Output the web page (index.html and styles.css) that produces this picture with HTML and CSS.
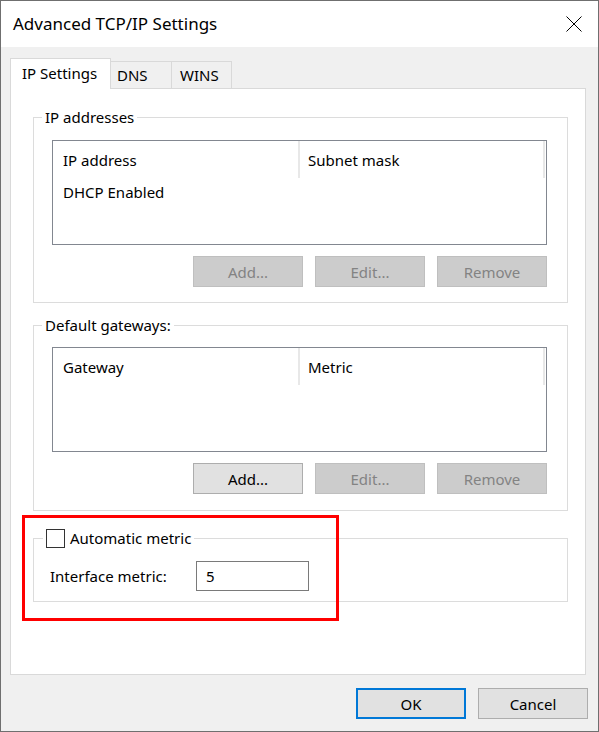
FILE: index.html
```html
<!DOCTYPE html>
<html lang="en">
<head>
    <meta charset="UTF-8">
    <meta name="viewport" content="width=device-width, initial-scale=1.0">
    <title>Advanced TCP/IP Settings</title>
    <link rel="stylesheet" href="styles.css">
</head>
<body>
    <div class="window">
        <div class="titlebar">
            <span class="title">Advanced TCP/IP Settings</span>
            <svg class="close" width="16" height="16" viewBox="0 0 16 16">
                <path d="M0.5 0.5 L15.5 15.5 M15.5 0.5 L0.5 15.5" stroke="#000" stroke-width="1" fill="none"/>
            </svg>
        </div>

        <div class="content">
            <div class="tabs">
                <div class="tab active">IP Settings</div>
                <div class="tab tab-dns">DNS</div>
                <div class="tab tab-wins">WINS</div>
            </div>

            <div class="panel">
                <fieldset class="group">
                    <legend>IP addresses</legend>
                    <div class="group-body">
                        <div class="list">
                            <div class="list-head">
                                <div class="col col-1">IP address</div>
                                <div class="col col-2">Subnet mask</div>
                            </div>
                            <div class="list-row">DHCP Enabled</div>
                        </div>
                        <div class="buttons">
                            <button class="btn" disabled>Add...</button>
                            <button class="btn" disabled>Edit...</button>
                            <button class="btn" disabled>Remove</button>
                        </div>
                    </div>
                </fieldset>

                <fieldset class="group gateways">
                    <legend>Default gateways:</legend>
                    <div class="group-body">
                        <div class="list">
                            <div class="list-head">
                                <div class="col col-1">Gateway</div>
                                <div class="col col-2">Metric</div>
                            </div>
                        </div>
                        <div class="buttons">
                            <button class="btn">Add...</button>
                            <button class="btn" disabled>Edit...</button>
                            <button class="btn" disabled>Remove</button>
                        </div>
                    </div>
                </fieldset>

                <fieldset class="group metric">
                    <legend><span class="checkbox"></span>Automatic metric</legend>
                    <div class="metric-row">
                        <label for="metric">Interface metric:</label>
                        <input type="text" id="metric" value="5">
                    </div>
                </fieldset>
            </div>

            <div class="footer">
                <button class="btn default">OK</button>
                <button class="btn">Cancel</button>
            </div>
        </div>

        <div class="highlight"></div>
    </div>
</body>
</html>
```

FILE: styles.css
```css
* {
    box-sizing: border-box;
}
body {
    margin: 0;
    font-family: "Noto Sans", "Open Sans", sans-serif;
    font-size: 15px;
    color: #000;
    background: #fff;
}
.window {
    position: relative;
    width: 599px;
    height: 732px;
    border: 1px solid #6f6f6f;
    background: #f0f0f0;
}
.titlebar {
    height: 46px;
    background: #fff;
    display: flex;
    align-items: center;
    justify-content: space-between;
    padding: 0 16px 0 12px;
}
.title {
    font-size: 17px;
    line-height: 20px;
    margin-top: -1px;
}
.close {
    display: block;
}
.content {
    padding: 11px 10px 0 9px;
}
.tabs {
    display: flex;
    align-items: flex-end;
    height: 30px;
}
.tab {
    height: 27px;
    line-height: 26px;
    border: 1px solid #d9d9d9;
    border-bottom: none;
    border-left: none;
    background: #f0f0f0;
}
.tab.active {
    position: relative;
    z-index: 1;
    width: 101px;
    height: 31px;
    margin-bottom: -1px;
    line-height: 28px;
    padding-left: 11px;
    border-left: 1px solid #d9d9d9;
    background: #fff;
}
.tab-dns {
    width: 61px;
    padding-left: 6px;
}
.tab-wins {
    width: 60px;
    padding-left: 8px;
}
.panel {
    width: 576px;
    height: 587px;
    background: #fff;
    border: 1px solid #d9d9d9;
    padding: 18px 17px 0 22px;
}
.group {
    margin: 0;
    padding: 0;
    border: 1px solid #dcdcdc;
    min-width: 0;
}
.group legend {
    margin-left: 8px;
    padding: 0 3px;
    line-height: 20px;
    height: 20px;
}
.group-body {
    padding: 13px 20px 15px 18px;
}
.gateways {
    margin-top: 12px;
}
.gateways .group-body {
    padding-top: 12px;
    padding-bottom: 16px;
}
.list {
    height: 105px;
    border: 1px solid #828790;
    background: #fff;
}
.list-head {
    display: flex;
    height: 37px;
}
.col {
    padding: 9px 0 0 10px;
    line-height: 20px;
    border-right: 2px solid #e8e8e8;
}
.col-1 {
    width: 247px;
}
.col-2 {
    width: 245px;
    padding-left: 8px;
}
.list-row {
    padding: 4px 0 0 10px;
    line-height: 20px;
}
.buttons {
    display: flex;
    justify-content: flex-end;
    gap: 12px;
    margin-top: 11px;
}
.btn {
    width: 110px;
    height: 31px;
    font-family: inherit;
    font-size: 15px;
    color: #000;
    background: #e1e1e1;
    border: 1px solid #adadad;
    padding: 0;
    border-radius: 0;
}
.btn:disabled {
    background: #cccccc;
    border-color: #bfbfbf;
    color: #838383;
}
.btn.default {
    border: 2px solid #0078d7;
}
.metric {
    margin-top: 17px;
}
.metric legend {
    display: flex;
    align-items: center;
    gap: 5px;
    margin-left: 9px;
    padding: 0 3px 0 3px;
}
.checkbox {
    display: inline-block;
    width: 19px;
    height: 19px;
    border: 1px solid #333;
    background: #fff;
}
.metric-row {
    display: flex;
    align-items: center;
    padding: 13px 0 10px 16px;
}
.metric-row label {
    width: 146px;
}
.metric-row input {
    width: 113px;
    height: 30px;
    border: 1px solid #7a7a7a;
    padding: 0 0 0 9px;
    font-family: inherit;
    font-size: 15px;
    outline: none;
}
.footer {
    display: flex;
    justify-content: flex-end;
    gap: 12px;
    margin-top: 13px;
}
.highlight {
    position: absolute;
    left: 21px;
    top: 514px;
    width: 317px;
    height: 106px;
    border: 3px solid #ff0000;
}
```
